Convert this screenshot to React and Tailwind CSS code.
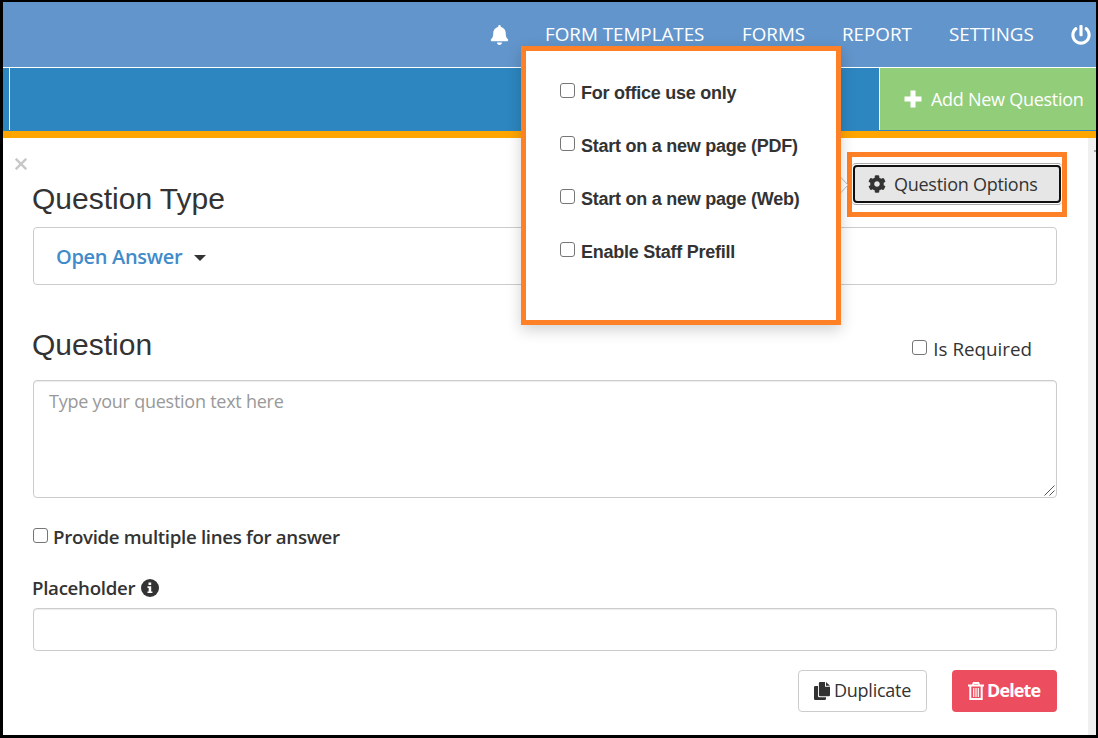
import React from "react";
import { FaBell, FaCog, FaPowerOff } from "react-icons/fa";

const NAV = [
  { label: "FORM TEMPLATES", box: "w-[197px]" },
  { label: "FORMS", box: "w-[100px]" },
  { label: "REPORT", box: "w-[107px]" },
  { label: "SETTINGS", box: "w-[122px]" },
];

const OPTIONS = [
  "For office use only",
  "Start on a new page (PDF)",
  "Start on a new page (Web)",
  "Enable Staff Prefill",
];

function Checkbox() {
  return (
    <input
      type="checkbox"
      className="h-[15px] w-[15px] shrink-0 appearance-none rounded-[3px] border border-[#767676] bg-white"
    />
  );
}

function InfoIcon() {
  return (
    <svg className="h-[18px] w-[18px] shrink-0" viewBox="0 0 18 18">
      <circle cx="9" cy="9" r="9" fill="#333" />
      <path d="M7.500 3.600h2.700v2.300H7.500zM6.500 7.300h3.700v5.200h1.200v1.600H6.500v-1.600h1.200V8.900H6.500z" fill="#fff" />
    </svg>
  );
}

function DuplicateIcon() {
  return (
    <svg className="mb-px h-[18px] w-4 shrink-0" viewBox="0 0 16 18" fill="#333">
      <path d="M6 0h5v4.800h5V13q0 1.300-1.300 1.300H6.200Q4.900 14.300 4.900 13V1.200Q4.900 0 6 0z" />
      <path d="M12 0l4 3.800h-4z" />
      <path d="M1.300 4H4v10q0 1.300 1.300 1.300H12V16.700Q12 18 10.700 18H1.300Q0 18 0 16.700V5.300Q0 4 1.300 4z" />
    </svg>
  );
}

function TrashIcon() {
  return (
    <svg className="mb-px h-[18px] w-4 shrink-0" viewBox="0 0 16 18" fill="none" stroke="#fff">
      <path d="M0 3.500h16" strokeWidth="2" />
      <path d="M4.800 3L5.600 1h4.800l.8 2" strokeWidth="1.800" />
      <path d="M2.300 4v13h11.400V4" strokeWidth="2" />
      <path d="M5.700 6v9M8 6v9M10.300 6v9" strokeWidth="1.200" />
    </svg>
  );
}

export default function App() {
  return (
    <div className="relative h-[738px] w-[1098px] overflow-hidden border-t-2 border-r-2 border-b-[3px] border-l-[3px] border-black bg-white font-['Open_Sans',sans-serif] text-[18px] text-[#333]">
      <header className="flex h-[65px] items-center bg-[#6295cb] pl-[487px] text-white">
        <FaBell className="h-5 w-[19px] shrink-0" />
        <nav className="ml-9 flex">
          {NAV.map((item) => (
            <a key={item.label} className={`${item.box} whitespace-nowrap text-[18.800px]`}>
              {item.label}
            </a>
          ))}
        </nav>
        <FaPowerOff className="h-5 w-5 shrink-0" />
      </header>
      <div className="flex h-[64px] border-t border-white bg-[#2d86c0] pb-px">
        <div className="w-[7px] border-r border-white" />
        <div className="flex-1" />
        <button className="flex w-[217px] items-center border-l border-white bg-[#92cd7a] pl-6 text-white">
          <svg className="h-[18px] w-[18px] shrink-0" viewBox="0 0 18 18" fill="none" stroke="#fff" strokeWidth="5">
            <path d="M.5 9h17M9 .5v17" />
          </svg>
          <span className="ml-[9px] whitespace-nowrap tracking-[-0.270px]">Add New Question</span>
        </button>
      </div>
      <div className="h-[7px] bg-[#ffa500]" />

      <div className="flex h-[597px]">
        <main className="flex w-[1085px] flex-col pl-[30px] pr-[31px]">
          <div className="flex h-[89px] justify-between">
            <div>
              <svg className="-ml-[18px] mt-5 h-3 w-3" viewBox="0 0 12 12" stroke="#c8c8c8" strokeWidth="2.400">
                <path d="M.7.700l10.600 10.600M11.300.700L.7 11.300" />
              </svg>
              <h2 className="-ml-px mt-[11px] whitespace-nowrap font-['Liberation_Sans',sans-serif] text-[30px] leading-[36px]">
                Question Type
              </h2>
            </div>
            <div className="-mr-[10px] mt-[14px] h-[65px] w-[220px] border-[5px] border-[#ff8127] pt-[6px]">
              <button className="flex h-[42px] w-[210px] items-center justify-center rounded-[4px] border-y border-[#adadad] bg-white">
                <span className="flex h-[38px] w-[208px] items-center rounded-[4px] border-2 border-[#101010] bg-[#e6e6e6] pl-[13px]">
                  <FaCog className="h-[18px] w-[18px] shrink-0" />
                  <span className="ml-2 whitespace-nowrap tracking-[-0.260px]">Question Options</span>
                </span>
              </button>
            </div>
          </div>
          <div className="flex h-[58px] items-center rounded-[4px] border border-[#ccc] pl-[22px]">
            <span className="mt-0.5 whitespace-nowrap text-[20px] font-semibold tracking-[-0.320px] text-[#428bca]">
              Open Answer
            </span>
            <svg className="ml-3 mt-[3px] h-[6px] w-3" viewBox="0 0 12 6" fill="#333">
              <path d="M0 0h12L6 6z" />
            </svg>
          </div>
          <div className="flex h-[95px] justify-between">
            <h2 className="-ml-px mt-[42px] font-['Liberation_Sans',sans-serif] text-[30px] leading-[36px]">Question</h2>
            <label className="mt-[50px] flex h-7 items-start pr-[25px]">
              <span className="mt-[5px] flex"><Checkbox /></span>
              <span className="ml-1.5 whitespace-nowrap text-[18.800px] leading-[28px]">Is Required</span>
            </label>
          </div>
          <div className="relative h-[118px] shrink-0">
            <textarea
              placeholder="Type your question text here"
              className="block h-full w-full resize-none rounded-[4px] border border-[#ccc] px-[15px] py-[8px] leading-[25px] tracking-[-0.250px] shadow-[inset_0_1px_1px_rgba(0,0,0,0.075)] placeholder:text-[#999]"
            />
            <svg className="absolute right-[2px] bottom-[2px] h-[11px] w-[11px]" viewBox="0 0 11 11" stroke="#555">
              <path d="M.5 10.500l10-10M5.500 10.500l5-5" />
            </svg>
          </div>
          <label className="mt-[26px] flex h-[26px] items-start font-semibold">
            <span className="mt-1 flex"><Checkbox /></span>
            <span className="ml-[5px] whitespace-nowrap text-[18.700px] leading-[26px] tracking-[-0.320px]">
              Provide multiple lines for answer
            </span>
          </label>
          <div className="mt-[25px] flex h-[26px] items-center font-semibold">
            <span className="-ml-px mr-1.5 whitespace-nowrap text-[18.700px] tracking-[-0.300px]">Placeholder</span>
            <InfoIcon />
          </div>
          <input className="mt-[7px] h-[43px] w-full shrink-0 rounded-[4px] border border-[#ccc] px-4 shadow-[inset_0_1px_1px_rgba(0,0,0,0.075)]" />
          <div className="mt-[19px] flex justify-end gap-[25px]">
            <button className="flex h-[42px] w-[129px] items-center rounded-[4px] border border-[#ccc] pl-[15px]">
              <DuplicateIcon />
              <span className="mb-0.5 ml-1 whitespace-nowrap tracking-[-0.250px]">Duplicate</span>
            </button>
            <button className="flex h-[42px] w-[105px] items-center rounded-[4px] bg-[#ed4e5f] pl-4 font-bold text-white">
              <TrashIcon />
              <span className="mb-0.5 ml-[3px] whitespace-nowrap tracking-[-0.900px]">Delete</span>
            </button>
          </div>
        </main>
        <div className="w-2 bg-[#f0f0f0] pt-[12px] pl-[6px]">
          <div className="h-0.5 w-0.5 bg-[#a3a3a3]" />
        </div>
      </div>

      <svg className="absolute top-[172px] left-[837px] h-[22px] w-[8px]" viewBox="0 0 8 22" fill="#fff" stroke="#bbb">
        <path d="M0 2.500l8 8.500-8 8.500" />
      </svg>
      <section className="absolute top-[44px] left-[518px] flex h-[279px] w-[320px] flex-col border-[5px] border-[#ff8127] bg-white pl-[34px] pt-[29px] font-['Liberation_Sans',sans-serif] font-bold shadow-[0_5px_14px_rgba(0,0,0,0.18)]">
        {OPTIONS.map((label) => (
          <label key={label} className="flex h-[53px] items-start">
            <span className="mt-[3px] flex"><Checkbox /></span>
            <span className="ml-1.5 whitespace-nowrap leading-[26px] tracking-[-0.250px]">{label}</span>
          </label>
        ))}
      </section>
    </div>
  );
}
